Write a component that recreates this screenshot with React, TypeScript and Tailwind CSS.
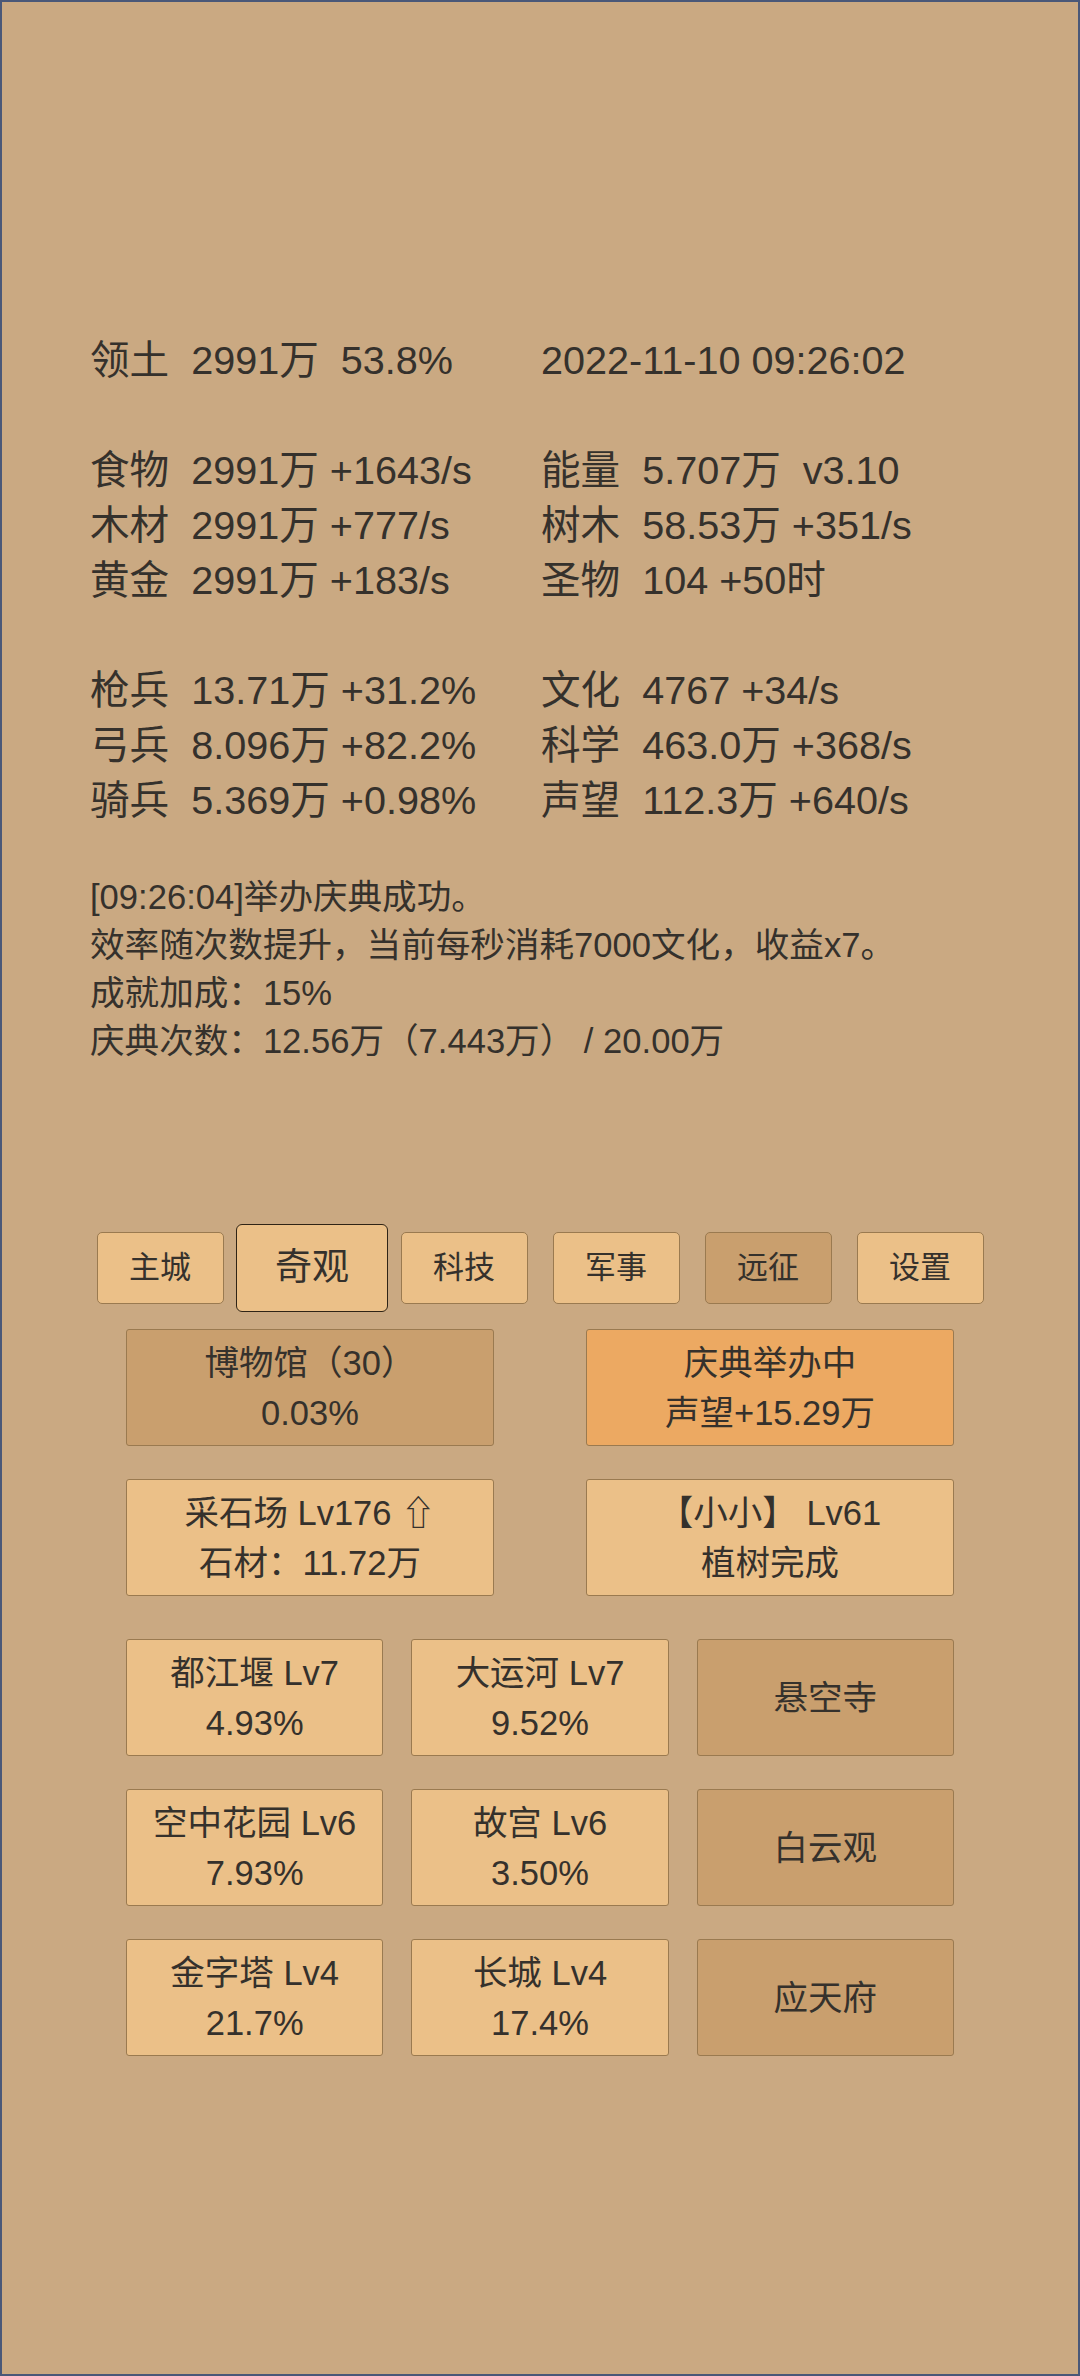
import React from "react";

type Tone = "light" | "dark" | "orange";

const toneClass: Record<Tone, string> = {
  light: "bg-[#ebc088]",
  dark: "bg-[#c99f6e]",
  orange: "bg-[#eca962]",
};

const statRows: [string, string][] = [
  ["领土  2991万  53.8%", "2022-11-10 09:26:02"],
  ["", ""],
  ["食物  2991万 +1643/s", "能量  5.707万  v3.10"],
  ["木材  2991万 +777/s", "树木  58.53万 +351/s"],
  ["黄金  2991万 +183/s", "圣物  104 +50时"],
  ["", ""],
  ["枪兵  13.71万 +31.2%", "文化  4767 +34/s"],
  ["弓兵  8.096万 +82.2%", "科学  463.0万 +368/s"],
  ["骑兵  5.369万 +0.98%", "声望  112.3万 +640/s"],
];

const logLines = [
  "[09:26:04]举办庆典成功。",
  "效率随次数提升，当前每秒消耗7000文化，收益x7。",
  "成就加成：15%",
  "庆典次数：12.56万（7.443万） / 20.00万",
];

const tabs = [
  { label: "主城" },
  { label: "奇观", active: true },
  { label: "科技" },
  { label: "军事" },
  { label: "远征", dim: true },
  { label: "设置" },
];

const wonders: { lines: string[]; tone: Tone }[] = [
  { lines: ["都江堰 Lv7", "4.93%"], tone: "light" },
  { lines: ["大运河 Lv7", "9.52%"], tone: "light" },
  { lines: ["悬空寺"], tone: "dark" },
  { lines: ["空中花园 Lv6", "7.93%"], tone: "light" },
  { lines: ["故宫 Lv6", "3.50%"], tone: "light" },
  { lines: ["白云观"], tone: "dark" },
  { lines: ["金字塔 Lv4", "21.7%"], tone: "light" },
  { lines: ["长城 Lv4", "17.4%"], tone: "light" },
  { lines: ["应天府"], tone: "dark" },
];

function Card({ lines, tone }: { lines: string[]; tone: Tone }) {
  return (
    <div
      className={`h-[117px] flex flex-col items-center justify-center rounded-[3px] border-[1.5px] border-[#9a7a50] text-[34.5px] leading-[50px] whitespace-pre ${toneClass[tone]}`}
    >
      {lines.map((l) => (
        <div key={l}>{l}</div>
      ))}
    </div>
  );
}

export default function App() {
  return (
    <div className="w-[1080px] h-[2376px] box-border border-2 border-[#4a5878] bg-[#caa982] text-[#35312c] font-['Liberation_Sans','Noto_Sans_CJK_SC',sans-serif]">
      <div className="pt-[331px] pl-[88px]">
        {statRows.map(([l, r], i) => (
          <div key={i} className="grid grid-cols-[451px_auto] h-[55px] items-center text-[39.6px] leading-[55px] whitespace-pre">
            <span>{l}</span>
            <span>{r}</span>
          </div>
        ))}
      </div>

      <div className="mt-[45px] pl-[88px] text-[34.6px] leading-[48px] whitespace-pre">
        {logLines.map((l) => (
          <div key={l}>{l}</div>
        ))}
      </div>

      <div className="mt-[159px] flex justify-center">
        {tabs.map((t) => (
          <div key={t.label} className="w-[152px] h-[88px] flex items-center justify-center">
            {t.active ? (
              <div className="w-[152px] h-[88px] flex items-center justify-center rounded-[6px] border-[1.5px] border-[#2f2416] bg-[#ebc088] text-[37px]">
                {t.label}
              </div>
            ) : (
              <div
                className={`w-[127px] h-[72px] flex items-center justify-center rounded-[5px] border-[1.5px] border-[#9a7a50] text-[31px] ${
                  t.dim ? "bg-[#c99f6e]" : "bg-[#ebc088]"
                }`}
              >
                {t.label}
              </div>
            )}
          </div>
        ))}
      </div>

      <div className="mx-auto w-[828px] mt-[17px] flex flex-col">
        <div className="grid grid-cols-[368px_368px] justify-between">
          <Card lines={["博物馆（30）", "0.03%"]} tone="dark" />
          <Card lines={["庆典举办中", "声望+15.29万"]} tone="orange" />
        </div>
        <div className="mt-[33px] grid grid-cols-[368px_368px] justify-between">
          <Card lines={["采石场 Lv176 ⇧", "石材：11.72万"]} tone="light" />
          <Card lines={["【小小】 Lv61", "植树完成"]} tone="light" />
        </div>
        <div className="mt-[43px] grid grid-cols-3 gap-x-[28px] gap-y-[33px]">
          {wonders.map((w) => (
            <Card key={w.lines[0]} lines={w.lines} tone={w.tone} />
          ))}
        </div>
      </div>
    </div>
  );
}
